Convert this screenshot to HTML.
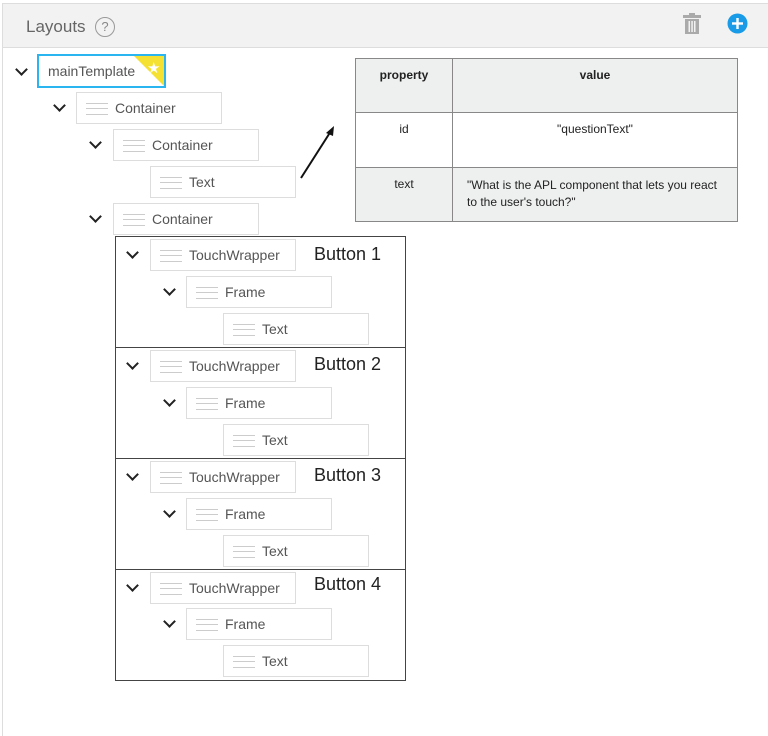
<!DOCTYPE html>
<html><head><style>
*{box-sizing:border-box;margin:0;padding:0}
body{width:768px;height:736px;background:#fff;font-family:"Liberation Sans",sans-serif;position:relative;overflow:hidden}
.hdr{position:absolute;left:2px;top:3px;width:766px;height:45px;background:#f2f2f2;border-top:1px solid #ddd;border-bottom:1px solid #ddd}
.side{position:absolute;left:2px;top:3px;width:1px;height:733px;background:#ddd}
.t{position:absolute;left:26px;top:17px;font-size:17px;color:#666}
.q{position:absolute;left:95px;top:17px;width:20px;height:20px;border:1.5px solid #999;border-radius:50%;color:#888;font-size:13px;text-align:center;line-height:17px}
.n{position:absolute;width:146px;height:32px;border:1px solid #ddd;background:#fff;font-size:14px;color:#555;line-height:30px;padding-left:38px}
.n::before{content:"";position:absolute;left:9px;top:10px;width:22px;height:10px;border-top:1px solid #ccc;border-bottom:1px solid #ccc}
.n::after{content:"";position:absolute;left:9px;top:15px;width:22px;height:1px;background:#ccc}
.c{position:absolute;width:9px;height:9px;border-right:2px solid #222;border-bottom:2px solid #222;transform:rotate(45deg)}
.g{position:absolute;left:115px;width:291px;height:112px;border:1.5px solid #444}
.bl{position:absolute;left:314px;font-size:18px;color:#222}
table{position:absolute;left:355px;top:58px;width:383px;border-collapse:collapse;font-size:12px;color:#222}
td{border:1px solid #888;vertical-align:top;padding-top:9px}
</style></head><body>
<div class="hdr"></div><div class="side"></div>
<div class="t">Layouts</div><div class="q">?</div>
<svg style="position:absolute;left:682px;top:13px" width="20" height="22" viewBox="0 0 20 22"><rect x="1" y="2" width="18" height="3" fill="#aaa"/><rect x="7" y="0" width="6" height="3" fill="#aaa"/><rect x="3" y="6" width="14" height="15" fill="#aaa"/><rect x="6.5" y="8" width="1.5" height="11" fill="#f2f2f2"/><rect x="9.3" y="8" width="1.5" height="11" fill="#f2f2f2"/><rect x="12" y="8" width="1.5" height="11" fill="#f2f2f2"/></svg>
<svg style="position:absolute;left:727px;top:13px" width="21" height="21"><circle cx="10.5" cy="10.5" r="10" fill="#1a9be8"/><rect x="5" y="9.3" width="11" height="2.4" fill="#fff"/><rect x="9.3" y="5" width="2.4" height="11" fill="#fff"/></svg>

<div class="c" style="left:17px;top:65px"></div>
<div style="position:absolute;left:37px;top:54px;width:129px;height:34px;border:2px solid #2ab4f0;background:#fff;font-size:14px;color:#555;line-height:30px;padding-left:9px;overflow:hidden">mainTemplate
<svg style="position:absolute;right:0;top:0" width="30" height="30"><polygon points="0,0 30,0 30,30" fill="#f5e132"/><text x="13" y="17" font-size="15" fill="#fff">★</text></svg></div>

<div class="c" style="left:55px;top:101px"></div><div class="n" style="left:76px;top:92px">Container</div>
<div class="c" style="left:91px;top:138px"></div><div class="n" style="left:113px;top:129px">Container</div>
<div class="n" style="left:150px;top:166px">Text</div>
<div class="c" style="left:91px;top:212px"></div><div class="n" style="left:113px;top:203px">Container</div>

<svg style="position:absolute;left:298px;top:124px" width="40" height="58"><line x1="3" y1="54" x2="33" y2="7" stroke="#111" stroke-width="2"/><polygon points="36,2 28,9 35,12" fill="#111"/></svg>

<div class="g" style="top:236px"></div>
<div class="g" style="top:347px"></div>
<div class="g" style="top:458px"></div>
<div class="g" style="top:569px;height:112px"></div>

<div class="c" style="left:128px;top:248px"></div><div class="n" style="left:150px;top:239px">TouchWrapper</div><div class="bl" style="top:244px">Button 1</div>
<div class="c" style="left:165px;top:285px"></div><div class="n" style="left:186px;top:276px">Frame</div>
<div class="n" style="left:223px;top:313px">Text</div>

<div class="c" style="left:128px;top:359px"></div><div class="n" style="left:150px;top:350px">TouchWrapper</div><div class="bl" style="top:354px">Button 2</div>
<div class="c" style="left:165px;top:396px"></div><div class="n" style="left:186px;top:387px">Frame</div>
<div class="n" style="left:223px;top:424px">Text</div>

<div class="c" style="left:128px;top:470px"></div><div class="n" style="left:150px;top:461px">TouchWrapper</div><div class="bl" style="top:465px">Button 3</div>
<div class="c" style="left:165px;top:507px"></div><div class="n" style="left:186px;top:498px">Frame</div>
<div class="n" style="left:223px;top:535px">Text</div>

<div class="c" style="left:128px;top:581px"></div><div class="n" style="left:150px;top:572px">TouchWrapper</div><div class="bl" style="top:574px">Button 4</div>
<div class="c" style="left:165px;top:617px"></div><div class="n" style="left:186px;top:608px">Frame</div>
<div class="n" style="left:223px;top:645px">Text</div>

<table>
<tr style="height:54px;background:#eef0ef;font-weight:bold"><td style="width:97px;text-align:center">property</td><td style="text-align:center">value</td></tr>
<tr style="height:55px"><td style="text-align:center">id</td><td style="text-align:center">"questionText"</td></tr>
<tr style="height:54px;background:#eef0ef"><td style="text-align:center">text</td><td style="padding-left:14px;padding-right:20px;line-height:17px">"What is the APL component that lets you react to the user's touch?"</td></tr>
</table>
</body></html>
